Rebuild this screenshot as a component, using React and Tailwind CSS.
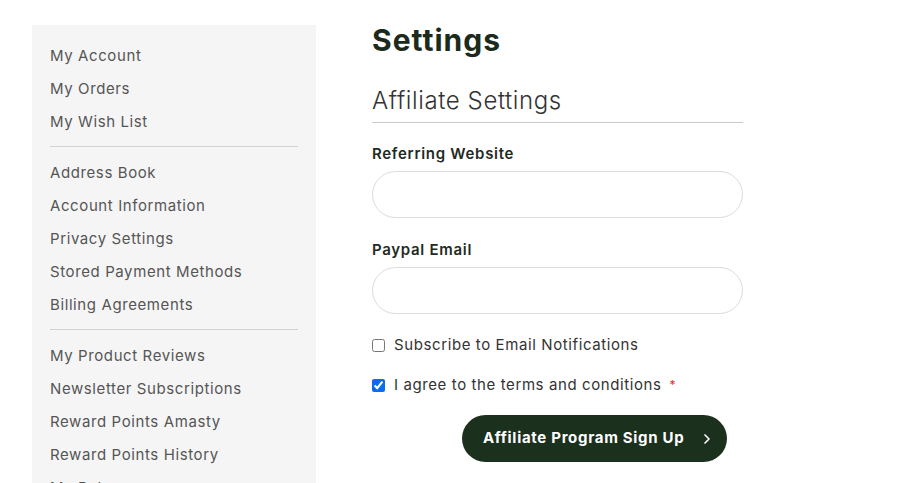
import { ChevronRight } from 'lucide-react';

const groups = [
  ['My Account', 'My Orders', 'My Wish List'],
  ['Address Book', 'Account Information', 'Privacy Settings', 'Stored Payment Methods', 'Billing Agreements'],
  ['My Product Reviews', 'Newsletter Subscriptions', 'Reward Points Amasty', 'Reward Points History', 'My Rates'],
];

function Sidebar() {
  return (
    <aside className="w-[284px] shrink-0 bg-[#f5f5f5] px-[18px] pt-[15px] pb-6 self-start">
      {groups.map((items, gi) => (
        <div key={gi}>
          {gi > 0 && <div className="mt-[7px] mb-[10px] h-px bg-[#d1d1d1]" />}
          <ul>
            {items.map((label) => (
              <li key={label} className="h-[33px] flex items-center text-[15px] text-[#555] tracking-[0.6px]">
                {label}
              </li>
            ))}
          </ul>
        </div>
      ))}
    </aside>
  );
}

function Field({ label }) {
  return (
    <div className="flex flex-col">
      <label className="text-[15px] font-semibold text-[#1f2b1f] leading-[20px] tracking-[0.7px]">{label}</label>
      <input
        type="text"
        className="mt-[7px] h-[47px] w-full rounded-full border border-[#dcdcdc] bg-white px-5 outline-none"
      />
    </div>
  );
}

export default function App() {
  return (
    <div className="min-h-screen bg-white flex pl-8 pt-[25px] gap-[56px]" style={{ fontFamily: 'Inter, "Noto Sans", sans-serif' }}>
      <Sidebar />
      <main className="w-[371px] flex flex-col">
        <h1 className="text-[30px] font-bold text-[#1c2a1c] leading-[36px] mt-[-3px] tracking-[1px]">Settings</h1>
        <h2 className="mt-[28px] text-[24px] font-light text-[#333] leading-[30px] tracking-[0.6px]">Affiliate Settings</h2>
        <div className="mt-[6px] h-px bg-[#c9c9c9]" />
        <div className="mt-[21px]">
          <Field label="Referring Website" />
        </div>
        <div className="mt-[22px]">
          <Field label="Paypal Email" />
        </div>
        <label className="mt-[21px] flex items-center h-[20px] text-[15px] text-[#333] tracking-[0.6px]">
          <input type="checkbox" className="w-[13px] h-[13px] mr-[9px]" />
          Subscribe to Email Notifications
        </label>
        <label className="mt-[20px] flex items-center h-[20px] text-[15px] text-[#333] tracking-[0.6px]">
          <input type="checkbox" defaultChecked className="w-[13px] h-[13px] mr-[9px] accent-[#0a6cf0]" />
          I agree to the terms and conditions
          <span className="ml-[8px] text-[#e02b27] text-[12px]">*</span>
        </label>
        <button className="mt-[20px] self-end mr-[16px] h-[47px] w-[265px] rounded-full bg-[#1c311d] text-white text-[15px] font-bold tracking-[0.7px] flex items-center pl-[21px] pr-[12px]">
          <span className="flex-1 text-left">Affiliate Program Sign Up</span>
          <ChevronRight size={16} strokeWidth={2.5} />
        </button>
      </main>
    </div>
  );
}
